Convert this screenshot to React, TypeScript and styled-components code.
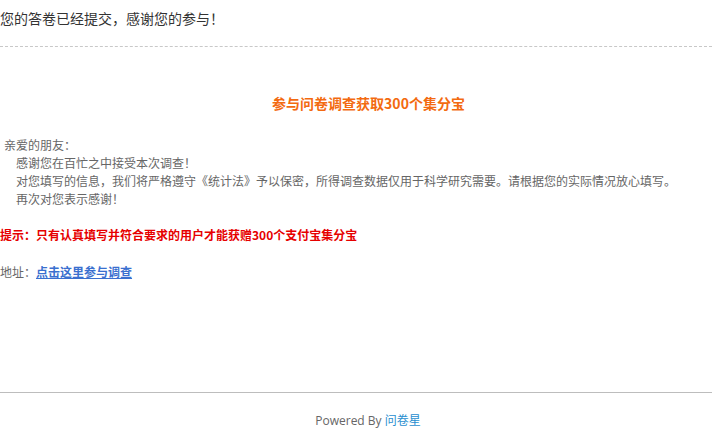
import React from 'react'
import styled, { createGlobalStyle } from 'styled-components'

const GlobalStyle = createGlobalStyle`
  html, body {
    margin: 0;
    padding: 0;
    background: #fff;
  }
  body {
    font-family: "Noto Sans CJK SC", "Liberation Sans", sans-serif;
  }
`

const Page = styled.div({
  width: '712px',
  height: '444px',
  display: 'flex',
  flexDirection: 'column',
  overflow: 'hidden',
})

const Header = styled.div({
  height: '36px',
  paddingTop: '10px',
  boxSizing: 'content-box',
  borderBottom: '1px dashed #c8c8c8',
  fontSize: '14px',
  lineHeight: '17px',
  color: '#333',
})

const Content = styled.div({
  flex: '0 0 345px',
  display: 'flex',
  flexDirection: 'column',
  fontSize: '12px',
  color: '#666',
})

const Title = styled.h2({
  margin: '46px 0 0',
  paddingLeft: '25px',
  textAlign: 'center',
  fontSize: '14px',
  lineHeight: '20px',
  fontWeight: 'bold',
  color: '#f36a10',
})

const Letter = styled.div({
  marginTop: '23px',
  lineHeight: '18px',
})

const Line = styled.div<{ $indent?: boolean }>(({ $indent }) => ({
  paddingLeft: $indent ? '16px' : '4px',
}))

const Tip = styled.div({
  marginTop: '18px',
  lineHeight: '18px',
  fontWeight: 'bold',
  color: '#e60000',
})

const Address = styled.div({
  marginTop: '19px',
  lineHeight: '18px',
})

const AddressLink = styled.a({
  color: '#3a6fcf',
  fontWeight: 'bold',
  textDecoration: 'underline',
})

const Footer = styled.div({
  borderTop: '1px solid #bdbdbd',
  paddingTop: '20px',
  paddingLeft: '24px',
  textAlign: 'center',
  fontFamily: '"Open Sans", "Noto Sans CJK SC", sans-serif',
  fontSize: '12px',
  lineHeight: '16px',
  color: '#666',
})

const FooterLink = styled.a({
  color: '#2a8fd0',
  textDecoration: 'none',
})

export default function App() {
  return (
    <Page>
      <GlobalStyle />
      <Header>您的答卷已经提交，感谢您的参与！</Header>
      <Content>
        <Title>参与问卷调查获取300个集分宝</Title>
        <Letter>
          <Line>亲爱的朋友：</Line>
          <Line $indent>感谢您在百忙之中接受本次调查！</Line>
          <Line $indent>
            对您填写的信息，我们将严格遵守《统计法》予以保密，所得调查数据仅用于科学研究需要。请根据您的实际情况放心填写。
          </Line>
          <Line $indent>再次对您表示感谢！</Line>
        </Letter>
        <Tip>提示：只有认真填写并符合要求的用户才能获赠300个支付宝集分宝</Tip>
        <Address>
          地址：<AddressLink href="#">点击这里参与调查</AddressLink>
        </Address>
      </Content>
      <Footer>
        Powered By <FooterLink href="#">问卷星</FooterLink>
      </Footer>
    </Page>
  )
}
